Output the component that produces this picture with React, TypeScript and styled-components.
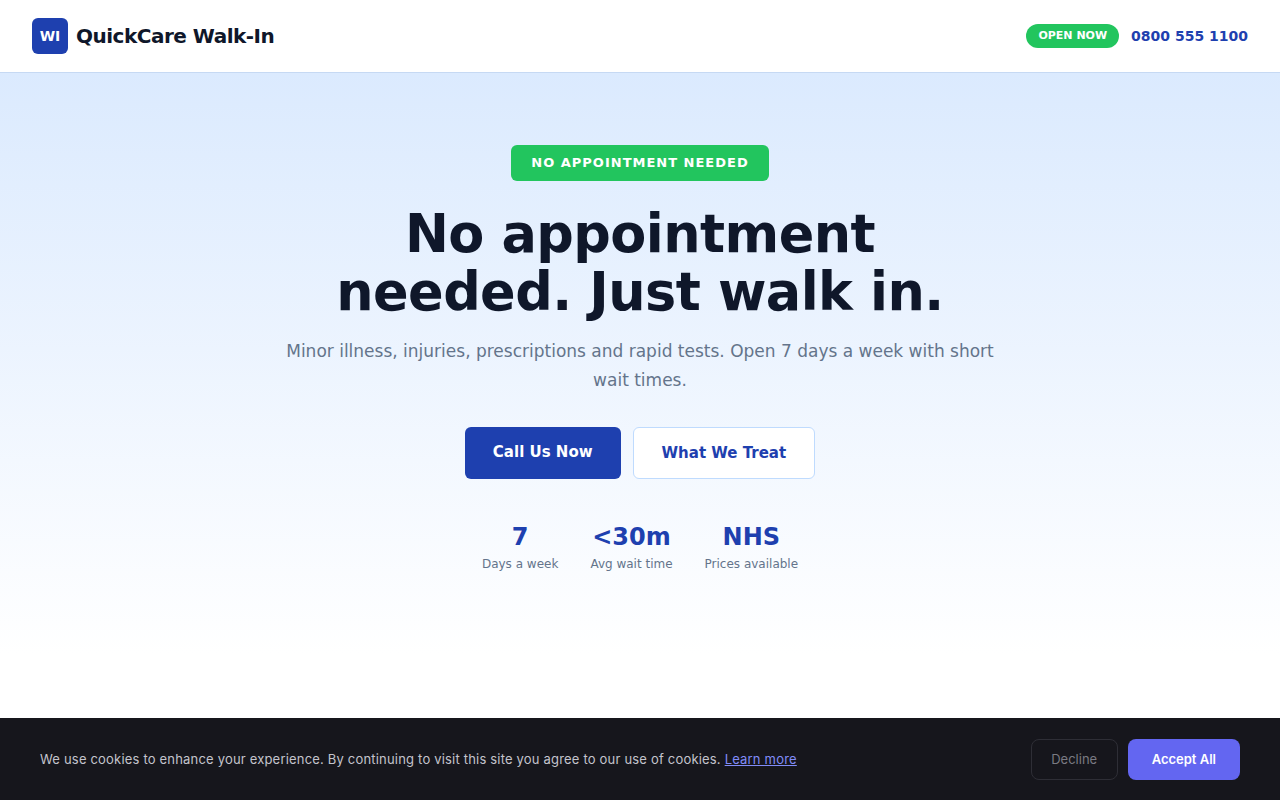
import React from "react";
import styled, { createGlobalStyle } from "styled-components";

const GlobalStyle = createGlobalStyle`
	* {
		box-sizing: border-box;
	}
	html, body {
		margin: 0;
		padding: 0;
		background: #fff;
		font-family: "DejaVu Sans", sans-serif;
		line-height: 1.6;
	}
`;

const Header = styled.header`
	display: flex;
	align-items: center;
	justify-content: space-between;
	height: 73px;
	padding: 0 32px;
	background: #fff;
	border-bottom: 1px solid #c6d9f3;
`;
const Brand = styled.div`
	display: flex;
	align-items: center;
	gap: 8px;
`;
const LogoMark = styled.div`
	display: flex;
	align-items: center;
	justify-content: center;
	width: 36px;
	height: 36px;
	border-radius: 6px;
	background: #1e40af;
	color: #fff;
	font-size: 14px;
	font-weight: 700;
`;
const BrandName = styled.div`
	color: #0f172a;
	font-size: 20px;
	font-weight: 700;
	letter-spacing: -0.5px;
`;
const HeaderRight = styled.div`
	display: flex;
	align-items: center;
	gap: 12px;
`;
const OpenPill = styled.span`
	padding: 3px 12px;
	border-radius: 999px;
	background: #22c55e;
	color: #fff;
	font-size: 11px;
	font-weight: 700;
`;
const Phone = styled.a`
	color: #1e40af;
	font-size: 14px;
	font-weight: 700;
`;

const Hero = styled.section`
	display: flex;
	flex-direction: column;
	align-items: center;
	padding: 72px 32px 80px;
	background: linear-gradient(180deg, #dbeafe 0%, #fff 100%);
	text-align: center;
`;
const Badge = styled.div`
	margin-bottom: 24px;
	padding: 8px 20px;
	border-radius: 6px;
	background: #22c55e;
	color: #fff;
	font-size: 13px;
	font-weight: 700;
	line-height: 20px;
	letter-spacing: 1px;
`;
const Title = styled.h1`
	max-width: 720px;
	margin: 0 0 17px;
	color: #0f172a;
	font-size: 52.48px;
	font-weight: 700;
	line-height: 1.1;
	letter-spacing: -0.56px;
`;
const Subtitle = styled.p`
	max-width: 720px;
	margin: 0 0 32px;
	color: #64748b;
	font-size: 17px;
	line-height: 1.7;
`;
const Actions = styled.div`
	display: flex;
	gap: 12px;
	margin-bottom: 40px;
`;
const Button = styled.a<{ $outline?: boolean }>`
	height: 52px;
	padding: ${({ $outline }) => ($outline ? "13px 28px" : "13px 28px 15px")};
	border: ${({ $outline }) => ($outline ? "1px solid #bfdbfe" : "none")};
	border-radius: 6px;
	background: ${({ $outline }) => ($outline ? "#fff" : "#1e40af")};
	color: ${({ $outline }) => ($outline ? "#1e40af" : "#fff")};
	font-size: 15px;
	font-weight: 700;
`;
const Stats = styled.div`
	display: flex;
	gap: 32px;
`;
const Stat = styled.div`
	display: flex;
	flex-direction: column;
	align-items: center;
`;
const StatValue = styled.div`
	color: #1e40af;
	font-size: 24px;
	font-weight: 700;
	line-height: 1.5;
`;
const StatLabel = styled.div`
	color: #64748b;
	font-size: 12px;
`;

const CookieBar = styled.div`
	position: fixed;
	left: 0;
	right: 0;
	bottom: 0;
	display: flex;
	align-items: center;
	justify-content: space-between;
	height: 82px;
	padding: 0 40px;
	background: #16161c;
	font-family: Inter, sans-serif;
`;
const CookieText = styled.p`
	margin: 0;
	color: #c4c4cc;
	font-size: 13px;
	letter-spacing: 0.19px;
`;
const CookieLink = styled.a`
	color: #818cf8;
	text-decoration: underline;
`;
const CookieActions = styled.div`
	display: flex;
	gap: 10px;
`;
const CookieButton = styled.button<{ $accept?: boolean }>`
	height: 41px;
	padding: 0 ${({ $accept }) => ($accept ? "24px" : "19.5px")};
	border: ${({ $accept }) => ($accept ? "none" : "1px solid #2e2e36")};
	border-radius: 8px;
	background: ${({ $accept }) => ($accept ? "#6366f1" : "transparent")};
	color: ${({ $accept }) => ($accept ? "#fff" : "#7a7a82")};
	font-family: inherit;
	font-size: 13px;
	font-weight: ${({ $accept }) => ($accept ? 600 : 400)};
`;

const stats = [
	{ value: "7", label: "Days a week" },
	{ value: "<30m", label: "Avg wait time" },
	{ value: "NHS", label: "Prices available" },
];

export default function App() {
	return (
		<>
			<GlobalStyle />
			<Header>
				<Brand>
					<LogoMark>WI</LogoMark>
					<BrandName>QuickCare Walk-In</BrandName>
				</Brand>
				<HeaderRight>
					<OpenPill>OPEN NOW</OpenPill>
					<Phone>0800 555 1100</Phone>
				</HeaderRight>
			</Header>
			<Hero>
				<Badge>NO APPOINTMENT NEEDED</Badge>
				<Title>No appointment needed. Just walk in.</Title>
				<Subtitle>Minor illness, injuries, prescriptions and rapid tests. Open 7 days a week with short wait times.</Subtitle>
				<Actions>
					<Button>Call Us Now</Button>
					<Button $outline>What We Treat</Button>
				</Actions>
				<Stats>
					{stats.map((s) => (
						<Stat key={s.label}>
							<StatValue>{s.value}</StatValue>
							<StatLabel>{s.label}</StatLabel>
						</Stat>
					))}
				</Stats>
			</Hero>
			<CookieBar>
				<CookieText>
					We use cookies to enhance your experience. By continuing to visit this site you agree to our use of cookies.{" "}
					<CookieLink>Learn more</CookieLink>
				</CookieText>
				<CookieActions>
					<CookieButton>Decline</CookieButton>
					<CookieButton $accept>Accept All</CookieButton>
				</CookieActions>
			</CookieBar>
		</>
	);
}
